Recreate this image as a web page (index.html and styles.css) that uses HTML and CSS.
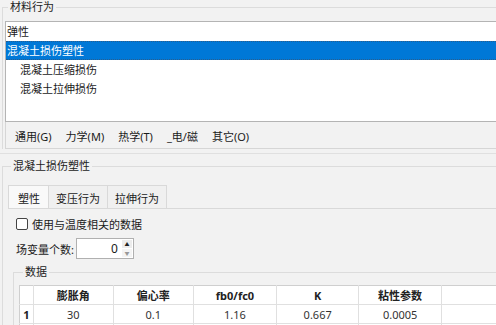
FILE: index.html
```html
<!DOCTYPE html>
<html lang="zh-CN">
<head>
    <meta charset="UTF-8">
    <title>编辑材料</title>
    <link rel="stylesheet" href="styles.css">
</head>
<body>
    <div class="window">
        <fieldset class="group group-top">
            <legend>材料行为</legend>
            <ul class="list">
                <li>弹性</li>
                <li class="selected">混凝土损伤塑性</li>
                <li class="sub">混凝土压缩损伤</li>
                <li class="sub">混凝土拉伸损伤</li>
            </ul>
            <div class="menubar">
                <span>通用(G)</span>
                <span>力学(M)</span>
                <span>热学(T)</span>
                <span>_电/磁</span>
                <span>其它(O)</span>
            </div>
        </fieldset>

        <div class="editor">
            <fieldset class="group group-edit">
                <legend>混凝土损伤塑性</legend>
                <div class="tabs">
                    <span class="tab active">塑性</span>
                    <span class="tab">变压行为</span>
                    <span class="tab">拉伸行为</span>
                </div>
                <div class="tabpane">
                    <label class="check"><span class="box"></span>使用与温度相关的数据</label>
                    <div class="field">
                        <span>场变量个数:</span>
                        <div class="spin">
                            <span class="spin-value">0</span>
                            <span class="spin-btns">
                                <span class="up">▲</span>
                                <span class="down">▼</span>
                            </span>
                        </div>
                    </div>
                    <fieldset class="group group-data">
                        <legend>数据</legend>
                        <table class="grid">
                            <tr>
                                <th class="rowhead"></th>
                                <th>膨胀角</th>
                                <th>偏心率</th>
                                <th>fb0/fc0</th>
                                <th>K</th>
                                <th>粘性参数</th>
                                <th></th>
                            </tr>
                            <tr>
                                <th class="rowhead">1</th>
                                <td>30</td>
                                <td>0.1</td>
                                <td>1.16</td>
                                <td>0.667</td>
                                <td>0.0005</td>
                                <td></td>
                            </tr>
                            <tr>
                                <th class="rowhead"></th>
                                <td></td><td></td><td></td><td></td><td></td><td></td>
                            </tr>
                        </table>
                    </fieldset>
                </div>
            </fieldset>
        </div>
    </div>
</body>
</html>
```

FILE: styles.css
```css
body {
    margin: 0;
    background: #f2f2f2;
    font-family: "Noto Sans", "Noto Sans CJK SC", sans-serif;
    font-size: 11px;
    color: #1a1a1a;
    overflow: hidden;
}
.window {
    width: 520px;
    height: 325px;
    overflow: hidden;
}

/* group boxes */
.group {
    margin: 0 0 0 2px;
    padding: 0 0 0 2px;
    border: 1px solid #dcdcdc;
    border-right: none;
    border-bottom: none;
    min-width: 0;
}
.group legend {
    margin-left: 3px;
    padding: 0 2px;
    line-height: 14px;
    color: #222;
}
.group-top {
    padding-top: 7px;
}

/* material list */
.list {
    list-style: none;
    margin: 0;
    padding: 0;
    height: 99px;
    background: #fff;
    border: 1px solid #b4b4b4;
    border-right: none;
}
.list li {
    height: 19px;
    line-height: 20px;
    padding-left: 1px;
}
.list li.sub {
    padding-left: 14px;
}
.list li.selected {
    background: #0078d7;
    color: #fff;
    height: 17px;
    line-height: 18px;
    border-top: 1px dotted #2a5d8c;
    border-bottom: 1px dotted #2a5d8c;
}

.menubar {
    display: flex;
    gap: 14px;
    height: 24px;
    padding: 2px 0 0 9px;
    align-items: center;
    border-left: 1px solid #d6d6d6;
    border-bottom: 1px solid #d6d6d6;
}

/* editor area */
.editor {
    margin-top: 4px;
    border-top: 1px solid #e0e0e0;
    padding-top: 5px;
}
.group-edit {
    padding-left: 5px;
}
.tabs {
    display: flex;
    margin-top: 12px;
    height: 23px;
}
.tab {
    display: flex;
    align-items: center;
    padding: 1px 7px 0;
    border: 1px solid #d9d9d9;
    border-bottom: none;
    border-left: none;
    background: #f0f0f0;
}
.tab.active {
    padding: 1px 8px 0 9px;
    border-left: 1px solid #d9d9d9;
    background: #f9f9f9;
}
.tabpane {
    border-top: 1px solid #d9d9d9;
    padding: 9px 0 0 5px;
}
.check {
    display: flex;
    align-items: center;
    gap: 4px;
    margin-left: 3px;
    height: 12px;
}
.box {
    width: 10px;
    height: 10px;
    border: 1px solid #444;
    border-radius: 2px;
    background: #fff;
}
.field {
    display: flex;
    align-items: center;
    gap: 2px;
    margin: 8px 0 0 3px;
}
.spin {
    display: flex;
    align-items: center;
    width: 56px;
    height: 19px;
    background: #fff;
    border: 1px solid #b0b0b0;
}
.spin-value {
    flex: 1;
    text-align: right;
    padding-right: 4px;
    font-size: 12px;
}
.spin-btns {
    display: flex;
    flex-direction: column;
    width: 10px;
    height: 17px;
    margin-right: 1px;
    font-size: 5px;
    line-height: 8px;
    text-align: center;
}
.spin-btns .up {
    color: #222;
    background: #ececec;
    border-bottom: 1px solid #fff;
}
.spin-btns .down {
    color: #999;
    background: #f4f4f4;
}

/* data table */
.group-data {
    margin: 6px 0 0 0;
    padding-left: 5px;
}
.group-data legend {
    margin-left: 4px;
}
.grid {
    margin-top: 6px;
    border-collapse: collapse;
    background: #fff;
    table-layout: fixed;
}
.grid th,
.grid td {
    border: 1px solid #e0e0e0;
    height: 18px;
    padding: 0;
    width: 90px;
    text-align: center;
    color: #333;
}
.grid th {
    font-weight: bold;
    color: #222;
}
.grid .rowhead {
    width: 14px;
}
.grid tr:first-child th {
    border-top-color: #cfcfcf;
}
.grid tr > :first-child {
    border-left-color: #cfcfcf;
}
```
